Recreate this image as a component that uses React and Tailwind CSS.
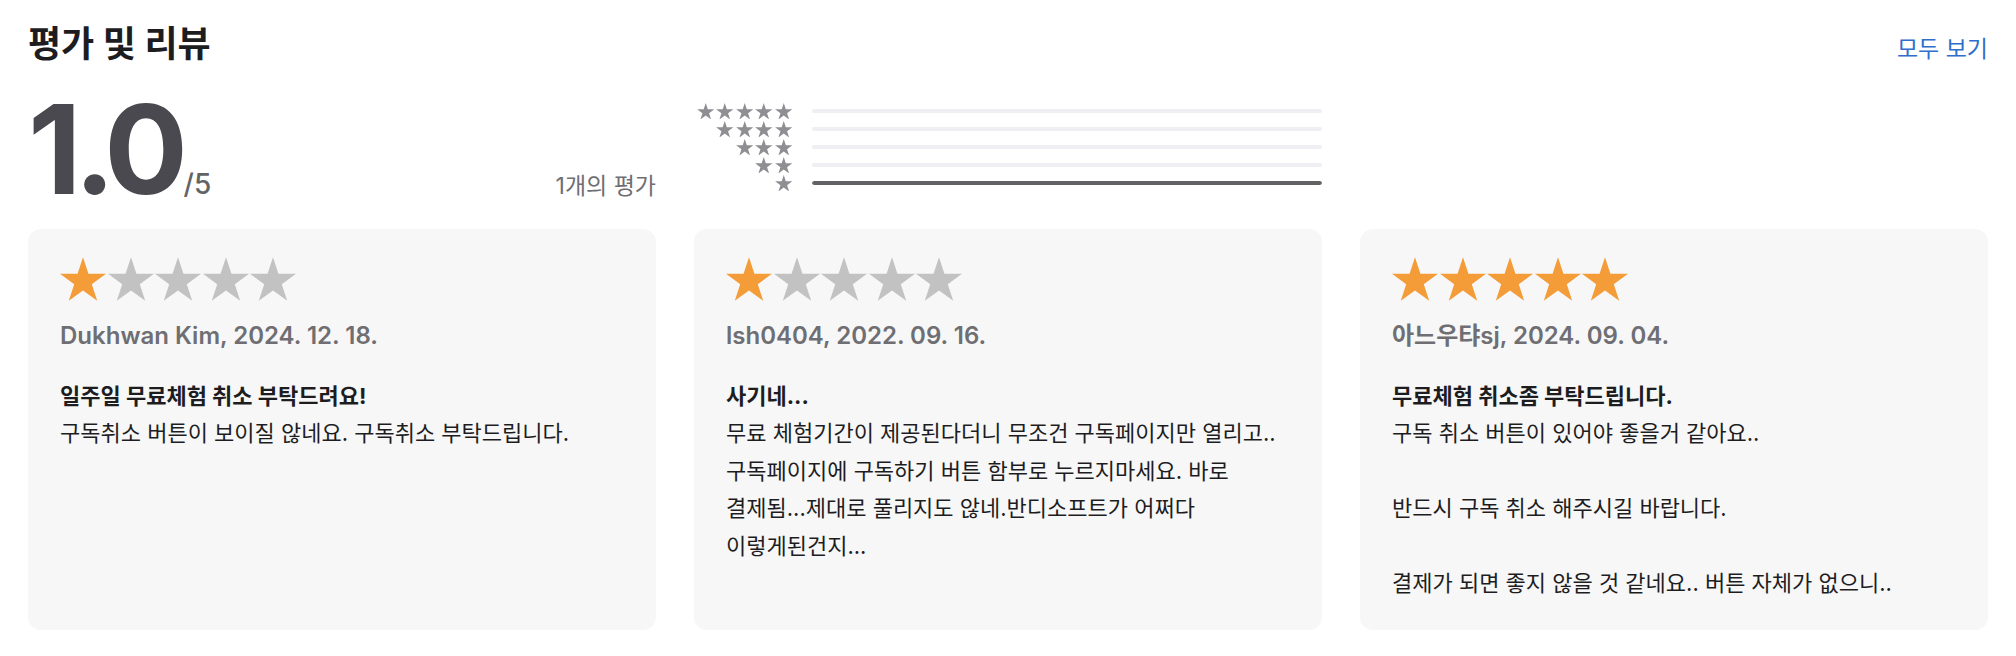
import React from "react";

const reviews = [
  {
    rating: 1,
    author: "Dukhwan Kim, 2024. 12. 18.",
    title: "일주일 무료체험 취소 부탁드려요!",
    body: "구독취소 버튼이 보이질 않네요. 구독취소 부탁드립니다.",
  },
  {
    rating: 1,
    author: "lsh0404, 2022. 09. 16.",
    title: "사기네...",
    body: "무료 체험기간이 제공된다더니 무조건 구독페이지만 열리고.. 구독페이지에 구독하기 버튼 함부로 누르지마세요. 바로 결제됨...제대로 풀리지도 않네.반디소프트가 어쩌다 이렇게된건지...",
  },
  {
    rating: 5,
    author: "아느우탸sj, 2024. 09. 04.",
    title: "무료체험 취소좀 부탁드립니다.",
    body: "구독 취소 버튼이 있어야 좋을거 같아요..\n\n반드시 구독 취소 해주시길 바랍니다.\n\n결제가 되면 좋지 않을 것 같네요.. 버튼 자체가 없으니..",
  },
];

// histogram: share of ratings per star count, 5 → 1
const histogram = [0, 0, 0, 0, 1];

function Star({ className }) {
  return (
    <svg viewBox="0 0 100 95.1" className={className} fill="currentColor">
      <polygon points="50,0 61.8,36.3 100,36.3 69.1,58.8 80.9,95.1 50,72.6 19.1,95.1 30.9,58.8 0,36.3 38.2,36.3" />
    </svg>
  );
}

function ReviewCard({ review }) {
  return (
    <div className="bg-[#f7f7f7] rounded-[13px] pt-[28px] pb-[27px] px-[32px]">
      <div className="flex gap-[1.5px]">
        {[1, 2, 3, 4, 5].map((n) => (
          <Star
            key={n}
            className={`w-[46px] h-[44px] ${n <= review.rating ? "text-[#f39c38]" : "text-[#c2c2c2]"}`}
          />
        ))}
      </div>
      <div className="mt-[20px] text-[24px] leading-[30px] font-semibold text-[#6e6e73]">
        {review.author}
      </div>
      <h3 className="mt-[27px] text-[22px] leading-[37px] font-bold text-[#1d1d1f]">{review.title}</h3>
      <p className="text-[22px] leading-[37.5px] text-[#1d1d1f] whitespace-pre-line break-keep">{review.body}</p>
    </div>
  );
}

export default function App() {
  return (
    <div className="min-h-screen bg-white px-[28px] pt-[20px] font-['Inter','Noto_Sans_CJK_KR',sans-serif]">
      {/* Header */}
      <div className="flex items-baseline justify-between">
        <h2 className="text-[36px] leading-[48px] font-bold text-[#1d1d1f]">평가 및 리뷰</h2>
        <a href="#" className="text-[23px] text-[#2f6ecb]">모두 보기</a>
      </div>

      {/* Summary */}
      <div className="mt-[19px] grid grid-cols-3 gap-x-[38px]">
        <div className="flex items-baseline">
          <span className="text-[124px] leading-none font-bold tracking-[-0.06em] text-[#4a494f]">1.0</span>
          <span className="ml-[3px] text-[28px] font-medium text-[#636366]">/5</span>
          <span className="ml-auto text-[23px] text-[#6e6e73]">1개의 평가</span>
        </div>
        <div className="mt-[15px] self-start flex flex-col">
          {histogram.map((v, i) => (
            <div key={i} className="h-[18px] flex items-center gap-[20px]">
              <div className="w-[98px] flex justify-end gap-[2px]">
                {Array.from({ length: 5 - i }).map((_, j) => (
                  <Star key={j} className="w-[17.5px] h-[16.5px] text-[#8e8e93]" />
                ))}
              </div>
              <div className="flex-1 h-[4px] rounded-full bg-[#efeff3] overflow-hidden">
                <div className="h-full rounded-full bg-[#636366]" style={{ width: `${v * 100}%` }} />
              </div>
            </div>
          ))}
        </div>
      </div>

      {/* Reviews */}
      <div className="mt-[18px] grid grid-cols-3 gap-x-[38px]">
        {reviews.map((r, i) => (
          <ReviewCard key={i} review={r} />
        ))}
      </div>
    </div>
  );
}
